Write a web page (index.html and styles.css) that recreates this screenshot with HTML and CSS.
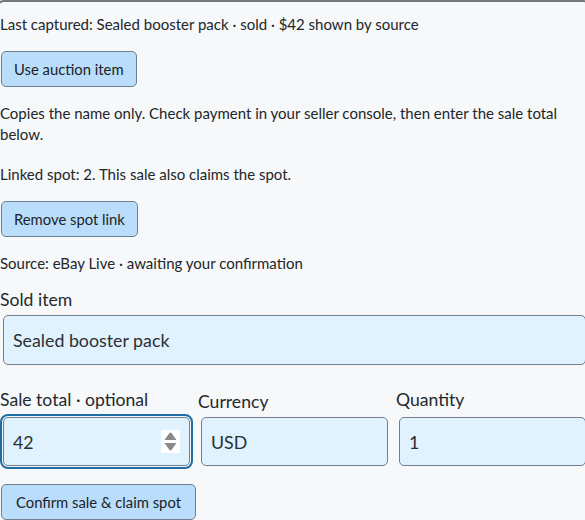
FILE: index.html
```html
<!DOCTYPE html>
<html lang="en">
<head>
<meta charset="utf-8">
<title>Confirm sale</title>
<link rel="stylesheet" href="styles.css">
</head>
<body>
<div class="panel">
  <p class="note note-first">Last captured: Sealed booster pack · sold · $42 shown by source</p>
  <button class="btn btn-after-note" type="button">Use auction item</button>
  <p class="note note-after-btn">Copies the name only. Check payment in your seller console, then enter the sale total below.</p>
  <p class="note note-linked">Linked spot: 2. This sale also claims the spot.</p>
  <button class="btn btn-after-note" type="button">Remove spot link</button>
  <p class="note note-source">Source: eBay Live · awaiting your confirmation</p>
  <div class="field field-item">
    <label class="field-label" for="item">Sold item</label>
    <input class="field-input field-input-lg" id="item" type="text" value="Sealed booster pack">
  </div>
  <div class="field-row">
    <div class="field">
      <label class="field-label" for="total">Sale total · optional</label>
      <div class="num-wrap">
        <input class="field-input is-focused" id="total" type="text" value="42">
        <span class="spin" aria-hidden="true">
          <svg width="19" height="23" viewBox="0 0 19 23"><rect width="19" height="23" fill="#ffffff"/><path d="M3.5 10 L8.5 3 Q9.5 2 10.5 3 L15.5 10 Z" fill="#8a8a8a"/><path d="M3.5 13 L15.5 13 L10.5 20 Q9.5 21 8.5 20 Z" fill="#8a8a8a"/></svg>
        </span>
      </div>
    </div>
    <div class="field">
      <label class="field-label field-label-low" for="currency">Currency</label>
      <input class="field-input" id="currency" type="text" value="USD">
    </div>
    <div class="field">
      <label class="field-label" for="qty">Quantity</label>
      <input class="field-input" id="qty" type="text" value="1">
    </div>
  </div>
  <button class="btn btn-confirm" type="button">Confirm sale &amp; claim spot</button>
</div>
</body>
</html>
```

FILE: styles.css
```css
html, body {
  margin: 0;
  padding: 0;
  background: #f6f8fa;
}

body {
  font-family: "Lato", "Liberation Sans", sans-serif;
  color: #222629;
  overflow: hidden;
}

.panel {
  display: flex;
  flex-direction: column;
  align-items: flex-start;
  width: 589px;
  margin-left: -4px;
  padding: 12px 0 0 2px;
  border: 2px solid #74777b;
  border-bottom: none;
  border-radius: 8px 8px 0 0;
  background: #f6f8fa;
}

.note {
  margin: 0;
  font-size: 15px;
  line-height: 21px;
}

.note-after-btn { margin-top: 16px; }
.note-linked { margin-top: 19px; }
.note-source { margin-top: 16px; }

.btn {
  font-family: inherit;
  font-size: 14.8px;
  line-height: 18px;
  color: #1d2227;
  background: #b9ddfb;
  border: 1px solid #6c7e92;
  border-radius: 5px;
  padding: 8px 12px;
  margin-left: 1px;
  cursor: pointer;
}

.btn-after-note { margin-top: 16px; }

.btn-confirm {
  margin-top: 18px;
  padding: 8px 14px;
}

.field {
  display: flex;
  flex-direction: column;
  align-self: stretch;
  min-width: 0;
}

.field-item { margin-top: 15px; }

.field-label {
  font-size: 17.6px;
  line-height: 22px;
  color: #24292e;
  margin-bottom: 6px;
}

.field-item .field-label { margin-bottom: 4px; }

.field-label-low {
  padding-top: 2px;
  margin-bottom: 4px;
}

.field-input {
  box-sizing: border-box;
  margin: 0 0 0 3px;
  width: calc(100% - 6px);
  height: 49px;
  padding: 0 9px;
  font-family: inherit;
  font-size: 17.8px;
  color: #2a2f34;
  background: #dff2fe;
  border: 1px solid #6e7f93;
  border-radius: 5px;
  outline: none;
}

.field-input-lg {
  height: 50px;
}

.field-input.is-focused {
  outline: 2px solid #1f6ea8;
  outline-offset: 1px;
}

.field-row {
  align-self: stretch;
  display: grid;
  grid-template-columns: repeat(3, 193px);
  column-gap: 5px;
  margin-top: 24px;
}

.num-wrap {
  position: relative;
  display: flex;
}

.spin {
  position: absolute;
  right: 13px;
  top: 13px;
  width: 19px;
  height: 23px;
  display: block;
}

.spin svg {
  display: block;
}
```
